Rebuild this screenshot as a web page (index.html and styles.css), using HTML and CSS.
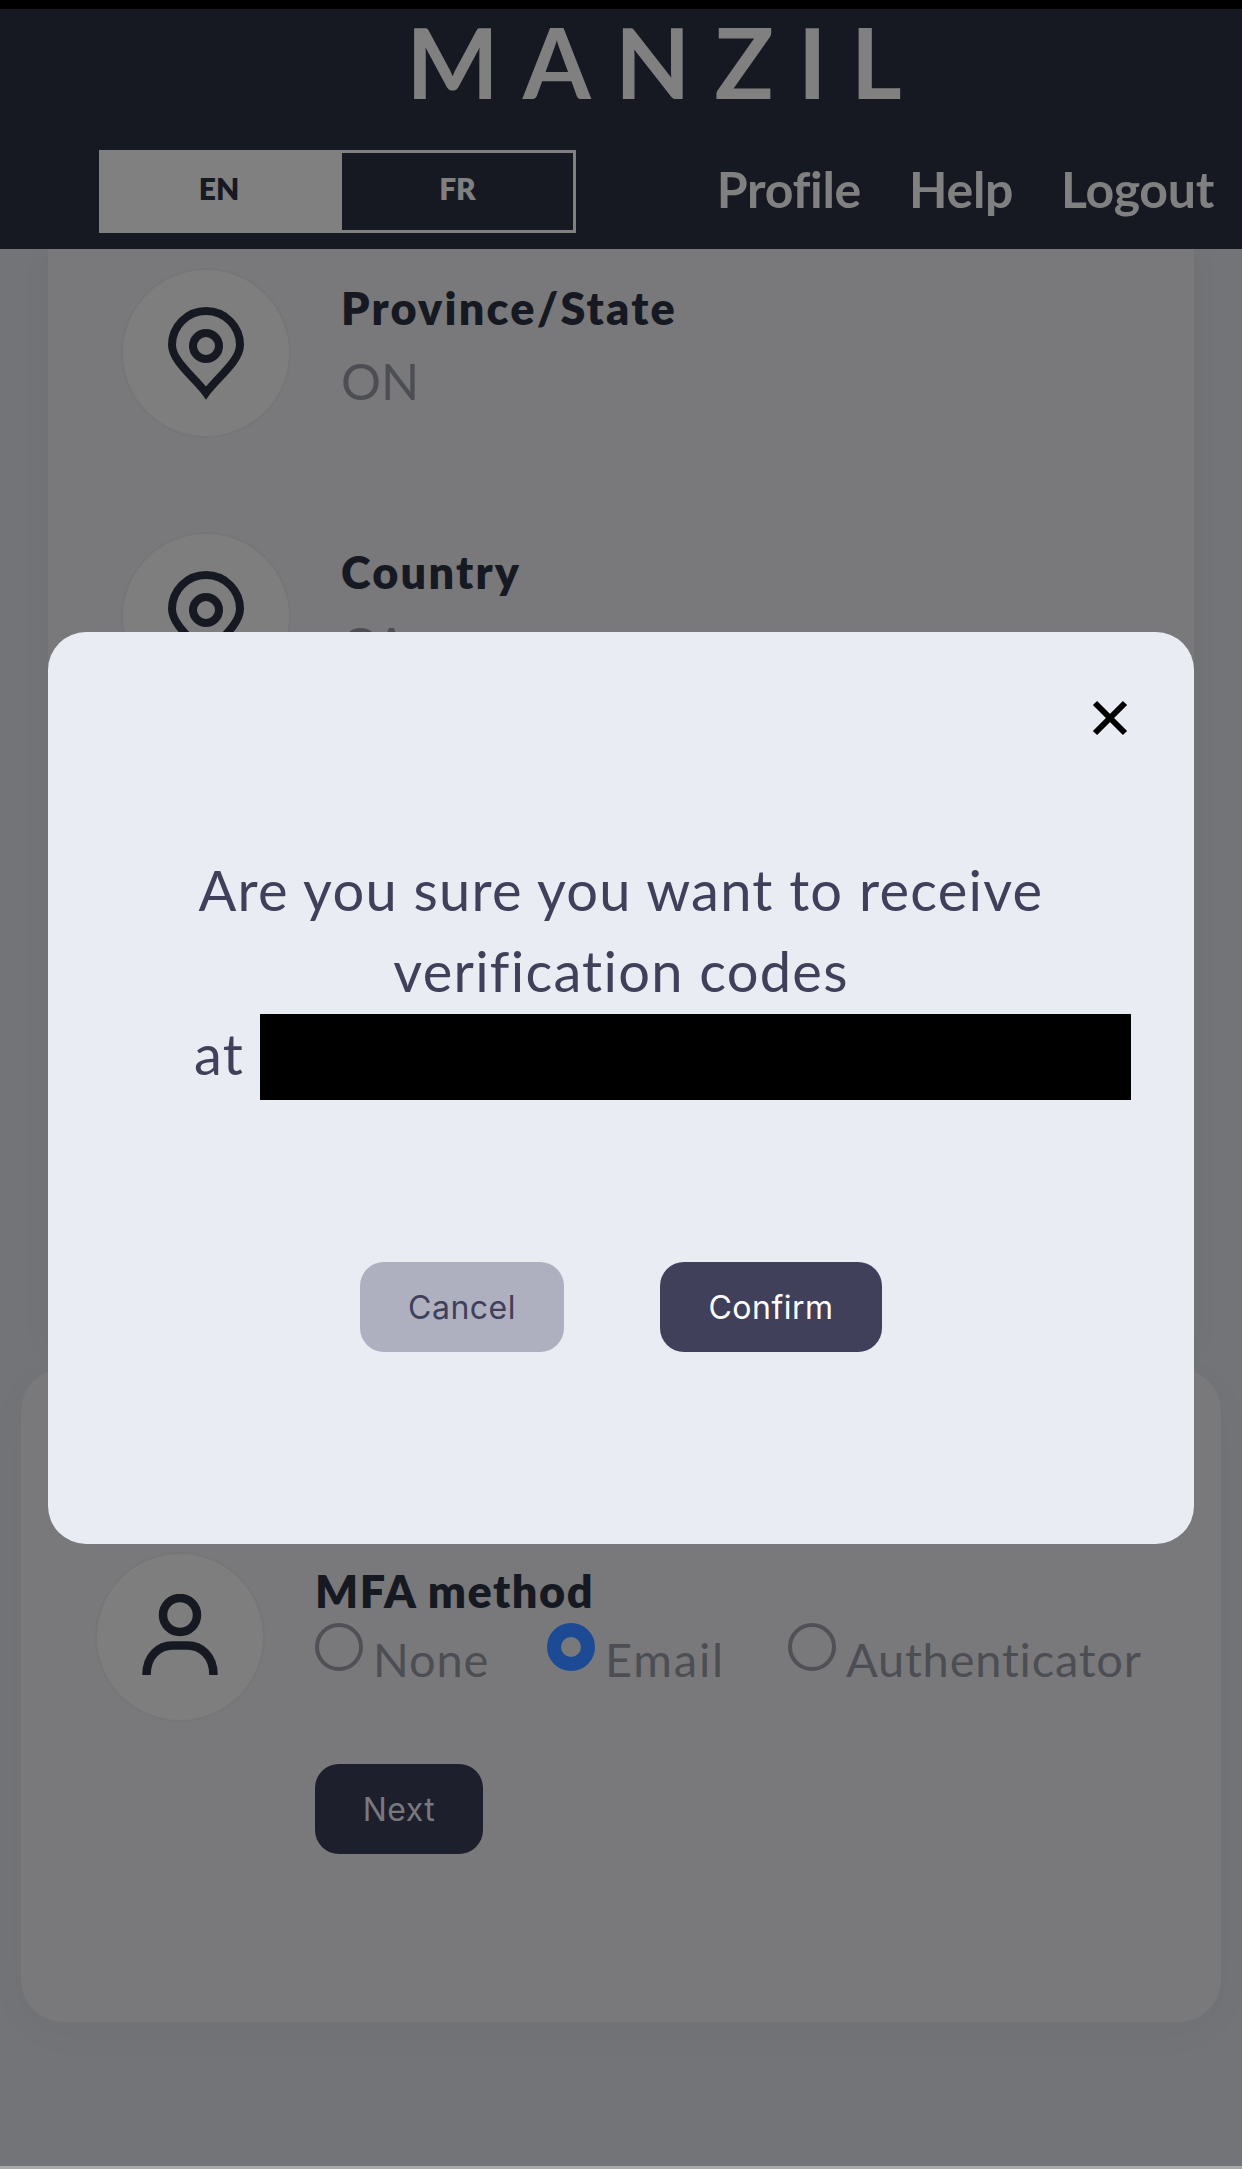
FILE: index.html
```html
<!DOCTYPE html>
<html lang="en">
<head>
<meta charset="utf-8">
<title>Manzil</title>
<link rel="stylesheet" href="styles.css">
</head>
<body>
<div class="status"></div>
<header class="header">
  <div class="logo">MANZIL</div>
  <div class="navrow">
    <div class="toggle">
      <span class="lang lang-on">EN</span>
      <span class="lang lang-off">FR</span>
    </div>
    <nav class="nav">
      <a class="navlink">Profile</a>
      <a class="navlink">Help</a>
      <a class="navlink">Logout</a>
    </nav>
  </div>
</header>
<main class="main">
  <section class="card-top">
    <div class="row">
      <div class="circle">
        <svg class="pin" viewBox="0 0 76 93"><path d="M38 86C27 71 4 54 4 38a34 34 0 0 1 68 0C72 54 49 71 38 86Z"/><circle cx="38" cy="39" r="13"/></svg>
      </div>
      <div class="col">
        <div class="label">Province/State</div>
        <div class="value">ON</div>
      </div>
    </div>
    <div class="row">
      <div class="circle">
        <svg class="pin" viewBox="0 0 76 93"><path d="M38 86C27 71 4 54 4 38a34 34 0 0 1 68 0C72 54 49 71 38 86Z"/><circle cx="38" cy="39" r="13"/></svg>
      </div>
      <div class="col">
        <div class="label">Country</div>
        <div class="value">CA</div>
      </div>
    </div>
  </section>
  <section class="card-bottom">
    <div class="row">
      <div class="circle">
        <svg class="person" viewBox="0 0 76 84"><circle cx="38" cy="21" r="17"/><path d="M4.5 81C4.5 61 18 51.5 30 51.5H46C58 51.5 71.5 61 71.5 81"/></svg>
      </div>
      <div class="col">
        <div class="label label-mfa">MFA method</div>
        <div class="radios">
          <label class="radio"><span class="dot"></span><span class="radio-text">None</span></label>
          <label class="radio radio-email"><span class="dot dot-on"></span><span class="radio-text">Email</span></label>
          <label class="radio"><span class="dot"></span><span class="radio-text">Authenticator</span></label>
        </div>
        <button class="btn btn-next">Next</button>
      </div>
    </div>
  </section>
</main>
<div class="modal">
  <svg class="close" viewBox="0 0 36 36"><path d="M3 3L33 33M33 3L3 33"/></svg>
  <p class="msg">Are you sure you want to receive<br>verification codes</p>
  <div class="msg-at"><span>at</span><span class="redact"></span></div>
  <div class="actions">
    <button class="btn btn-cancel">Cancel</button>
    <button class="btn btn-confirm">Confirm</button>
  </div>
</div>
</body>
</html>
```
FILE: styles.css
```css
* { box-sizing: border-box; }
html, body { margin: 0; padding: 0; }
body {
  position: relative;
  width: 1242px;
  height: 2169px;
  overflow: hidden;
  background: #737478;
  border-bottom: 3px solid #a9a9a9;
  font-family: "Lato", "Liberation Sans", sans-serif;
}
.status { height: 9px; background: #000; }
.header {
  position: relative;
  z-index: 2;
  height: 240px;
  background: #161922;
}
.logo {
  height: 141px;
  text-align: center;
  font-size: 98px;
  line-height: 104px;
  letter-spacing: 24px;
  padding-left: 90px;
  color: #808080;
  font-weight: 700;
}
.navrow {
  display: flex;
  align-items: center;
  justify-content: space-between;
  padding: 0 28px 0 99px;
}
.toggle {
  display: flex;
  width: 477px;
  height: 83px;
  border: 3px solid #808080;
}
.lang {
  display: flex;
  align-items: center;
  justify-content: center;
  font-size: 30px;
  font-weight: 800;
  padding-bottom: 8px;
}
.lang-on { width: 240px; background: #808080; color: #161922; padding-right: 6px; }
.lang-off { flex: 1; color: #808080; }
.nav { display: flex; gap: 48px; margin-top: -5px; }
.navlink { font-size: 50px; font-weight: 700; color: #808080; letter-spacing: -0.3px; }

.main { display: block; }
.card-top {
  width: 1146px;
  height: 1100px;
  margin: 0 auto;
  padding: 19px 0 0 73px;
  background: #79797b;
  box-shadow: 0 0 30px rgba(0,0,0,.04);
  overflow: hidden;
}
.card-top .row { height: 264px; }
.card-bottom {
  width: 1200px;
  height: 653px;
  margin: 20px 0 0 21px;
  padding: 183px 0 0 74px;
  background: #79797b;
  border-radius: 42px;
  box-shadow: 0 10px 40px rgba(0,0,0,.03);
}
.row { display: flex; align-items: flex-start; }
.circle {
  flex: none;
  width: 170px;
  height: 170px;
  border-radius: 50%;
  background: #7e7e7e;
  border: 2px solid #767678;
  display: flex;
  align-items: center;
  justify-content: center;
}
.pin { width: 76px; height: 93px; fill: none; stroke: #161922; stroke-width: 8; }
.person { width: 76px; height: 84px; fill: none; stroke: #161922; stroke-width: 8.5; margin-top: -3px; }
.col { margin-left: 50px; }
.label { font-size: 45px; line-height: 54px; font-weight: 800; color: #161922; margin-top: 13px; letter-spacing: 2.2px; }
.value { font-size: 50px; line-height: 60px; font-weight: 400; color: #4d4e53; margin-top: 16px; }
.label-mfa { margin-top: 12px; letter-spacing: 1.5px; }
.radios { display: flex; gap: 58px; margin-top: 5px; }
.radio { display: flex; gap: 10px; align-items: flex-start; }
.radio-email { margin-right: 5px; }
.radio-email .radio-text { letter-spacing: 1.8px; }
.dot {
  flex: none;
  width: 48px;
  height: 48px;
  border-radius: 50%;
  border: 4px solid #505156;
}
.dot-on { border: 14px solid #1c4a94; }
.radio-text { font-size: 47px; line-height: 56px; color: #4d4e53; margin-top: 8px; letter-spacing: .8px; }
.btn {
  border: 0;
  font-family: "Inter", "Liberation Sans", sans-serif;
  font-size: 32px;
  letter-spacing: .5px;
  height: 90px;
  border-radius: 24px;
  padding: 0;
  display: block;
}
.btn-next { width: 168px; margin-top: 77px; background: #1e1f2c; color: #78787f; }

.modal {
  position: absolute;
  left: 48px;
  top: 632px;
  width: 1146px;
  height: 912px;
  background: #e9ecf3;
  border-radius: 38px;
  padding-top: 68px;
  color: #40405b;
  z-index: 3;
}
.close { display: block; width: 36px; height: 36px; margin: 0 66px 0 auto; fill: none; stroke: #000; stroke-width: 6; }
.msg { margin: 113px 0 0; text-align: center; font-size: 56px; line-height: 81px; letter-spacing: 1.25px; }
.msg-at { display: flex; align-items: flex-start; gap: 16px; padding-left: 146px; font-size: 56px; line-height: 86px; letter-spacing: 1.25px; }
.redact { width: 871px; height: 86px; margin-top: 3px; background: #000; }
.actions { display: flex; justify-content: center; gap: 96px; margin-top: 162px; }
.btn-cancel { width: 204px; background: #aeb0c0; color: #40405b; }
.btn-confirm { width: 222px; background: #40405b; color: #fff; }
```
